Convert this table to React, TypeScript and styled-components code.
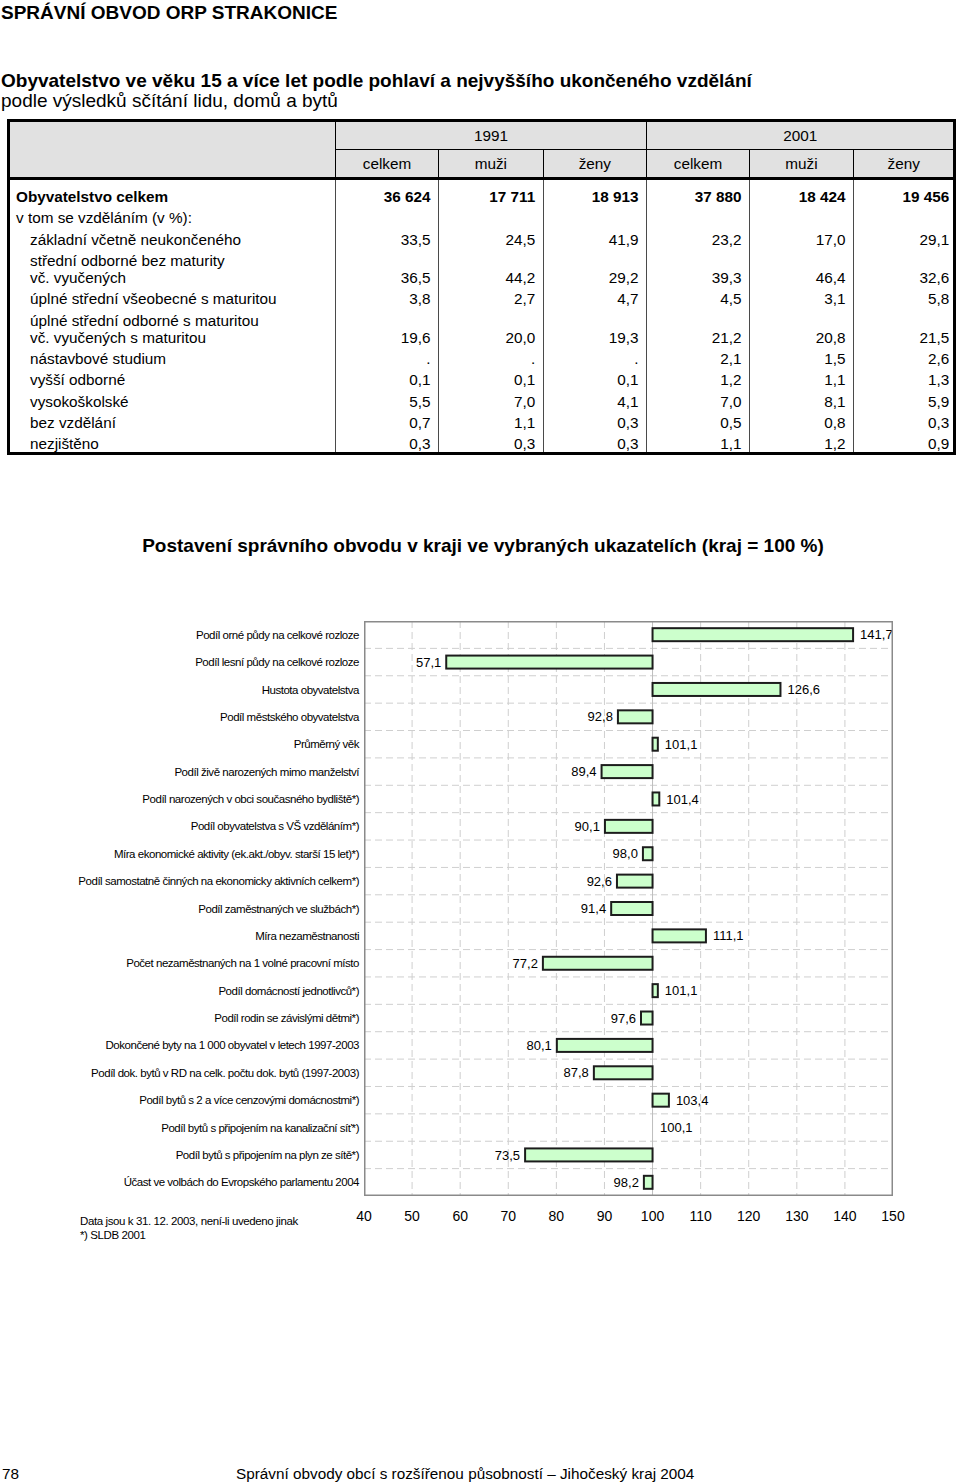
import React from "react";
import styled, { createGlobalStyle } from "styled-components";

const GlobalStyle = createGlobalStyle`
  html, body { margin: 0; padding: 0; background: #fff; }
  body { font-family: "Liberation Sans", Arial, sans-serif; color: #000; }
`;

const Page = styled.div`
  width: 960px;
  min-height: 1484px;
  display: flex;
  flex-direction: column;
  box-sizing: border-box;
`;

const PageTitle = styled.h1`
  margin: 2px 0 0 1px;
  font-size: 19px;
  line-height: 22px;
  font-weight: 700;
`;

const Subtitle = styled.h2`
  margin: 47.4px 0 0 1px;
  font-size: 19px;
  line-height: 20px;
  font-weight: 400;
`;

const SubtitleStrong = styled.span`
  display: block;
  font-weight: 700;
`;

const TableFrame = styled.div`
  margin: 7.6px 0 0 7px;
  width: 949.3px;
  border: 3px solid #000;
  box-sizing: border-box;
`;

const Table = styled.table`
  width: 100%;
  border-collapse: separate;
  border-spacing: 0;
  table-layout: fixed;
  font-size: 15.3px;
  line-height: 17px;
  tbody tr:first-child td {
    padding-top: 7.9px;
  }
`;

const Col = styled.col<{ $w: number }>`
  width: ${(p) => p.$w}px;
`;

const HeadCell = styled.th<{ $divider?: boolean; $bottom: number; $pad: number }>`
  background: #e1e1e1;
  font-weight: 400;
  text-align: center;
  padding: ${(p) => p.$pad}px 0;
  border-left: ${(p) => (p.$divider ? "1px solid #000" : "none")};
  border-bottom: ${(p) => p.$bottom}px solid #000;
`;

const LabelCell = styled.td<{ $level: number; $bold?: boolean }>`
  padding: 4.33px 0 0 ${(p) => (p.$level ? 20 : 6)}px;
  font-weight: ${(p) => (p.$bold ? 700 : 400)};
  vertical-align: bottom;
  white-space: nowrap;
`;

const ValueCell = styled.td<{ $bold?: boolean; $last?: boolean }>`
  padding: 4.33px ${(p) => (p.$last ? 4 : 7.5)}px 0 0;
  text-align: right;
  border-left: 1px solid #4a4a4a;
  vertical-align: bottom;
  font-weight: ${(p) => (p.$bold ? 700 : 400)};
  white-space: nowrap;
`;

const ChartTitle = styled.h2`
  margin: 80.7px 0 0 6px;
  font-size: 19px;
  line-height: 20px;
  font-weight: 700;
  text-align: center;
`;

const ChartGrid = styled.div`
  margin-top: 65px;
  display: grid;
  grid-template-columns: 364px 529px;
  grid-template-rows: 575px auto;
`;

const LabelColumn = styled.div`
  display: flex;
  flex-direction: column;
`;

const CategoryLabel = styled.div`
  height: ${575 / 21}px;
  display: flex;
  align-items: center;
  justify-content: flex-end;
  padding-right: 5px;
  font-size: 11.5px;
  letter-spacing: -0.47px;
  white-space: nowrap;
  color: #000;
`;

const PlotSvg = styled.svg`
  display: block;
  overflow: visible;
  font-family: "Liberation Sans", Arial, sans-serif;
`;

const Footnote = styled.div`
  padding: 17.7px 0 0 80px;
  font-size: 11.5px;
  line-height: 14.5px;
  letter-spacing: -0.4px;
`;

const Footer = styled.footer`
  margin-top: auto;
  padding: 0 0 2px 2px;
  display: grid;
  grid-template-columns: 234px 1fr;
  font-size: 15.3px;
  line-height: 16px;
`;

type Row = {
  label: React.ReactNode;
  level: number;
  bold?: boolean;
  values: string[];
};

const rows: Row[] = [
  { label: "Obyvatelstvo celkem", level: 0, bold: true, values: ["36 624", "17 711", "18 913", "37 880", "18 424", "19 456"] },
  { label: "v tom se vzděláním (v %):", level: 0, values: ["", "", "", "", "", ""] },
  { label: "základní včetně neukončeného", level: 1, values: ["33,5", "24,5", "41,9", "23,2", "17,0", "29,1"] },
  {
    label: (
      <>
        střední odborné bez maturity
        <br />
        vč. vyučených
      </>
    ),
    level: 1,
    values: ["36,5", "44,2", "29,2", "39,3", "46,4", "32,6"],
  },
  { label: "úplné střední všeobecné s maturitou", level: 1, values: ["3,8", "2,7", "4,7", "4,5", "3,1", "5,8"] },
  {
    label: (
      <>
        úplné střední odborné s maturitou
        <br />
        vč. vyučených s maturitou
      </>
    ),
    level: 1,
    values: ["19,6", "20,0", "19,3", "21,2", "20,8", "21,5"],
  },
  { label: "nástavbové studium", level: 1, values: [".", ".", ".", "2,1", "1,5", "2,6"] },
  { label: "vyšší odborné", level: 1, values: ["0,1", "0,1", "0,1", "1,2", "1,1", "1,3"] },
  { label: "vysokoškolské", level: 1, values: ["5,5", "7,0", "4,1", "7,0", "8,1", "5,9"] },
  { label: "bez vzdělání", level: 1, values: ["0,7", "1,1", "0,3", "0,5", "0,8", "0,3"] },
  { label: "nezjištěno", level: 1, values: ["0,3", "0,3", "0,3", "1,1", "1,2", "0,9"] },
];

const indicators: [string, number][] = [
  ["Podíl orné půdy na celkové rozloze", 141.7],
  ["Podíl lesní půdy na celkové rozloze", 57.1],
  ["Hustota obyvatelstva", 126.6],
  ["Podíl městského obyvatelstva", 92.8],
  ["Průměrný věk", 101.1],
  ["Podíl živě narozených mimo manželství", 89.4],
  ["Podíl narozených v obci současného bydliště*)", 101.4],
  ["Podíl obyvatelstva s VŠ vzděláním*)", 90.1],
  ["Míra ekonomické aktivity (ek.akt./obyv. starší 15 let)*)", 98.0],
  ["Podíl samostatně činných na ekonomicky aktivních celkem*)", 92.6],
  ["Podíl zaměstnaných ve službách*)", 91.4],
  ["Míra nezaměstnanosti", 111.1],
  ["Počet nezaměstnaných na 1 volné pracovní místo", 77.2],
  ["Podíl domácností jednotlivců*)", 101.1],
  ["Podíl rodin se závislými dětmi*)", 97.6],
  ["Dokončené byty na 1 000 obyvatel v letech 1997-2003", 80.1],
  ["Podíl dok. bytů v RD na celk. počtu dok. bytů (1997-2003)", 87.8],
  ["Podíl bytů s 2 a více cenzovými domácnostmi*)", 103.4],
  ["Podíl bytů s připojením na kanalizační síť*)", 100.1],
  ["Podíl bytů s připojením na plyn ze sítě*)", 73.5],
  ["Účast ve volbách do Evropského parlamentu 2004", 98.2],
];

const PLOT_W = 529;
const PLOT_H = 575;
const SCALE = PLOT_W / 110;
const BAND = PLOT_H / 21;
const xOf = (v: number) => (v - 40) * SCALE;
const fmt = (v: number) => v.toFixed(1).replace(".", ",");
const ticks = Array.from({ length: 12 }, (_, i) => 40 + i * 10);

function Plot() {
  const x100 = xOf(100);
  return (
    <PlotSvg width={PLOT_W} height={PLOT_H} viewBox={`0 0 ${PLOT_W} ${PLOT_H}`}>
      {Array.from({ length: 20 }, (_, i) => (
        <line
          key={`h${i}`}
          x1={0}
          x2={PLOT_W}
          y1={(i + 1) * BAND}
          y2={(i + 1) * BAND}
          stroke="#cfcfcf"
          strokeWidth={1}
          strokeDasharray="7 4"
        />
      ))}
      {ticks.slice(1, 11).map((t) =>
        t === 100 ? null : (
          <line
            key={`v${t}`}
            x1={xOf(t)}
            x2={xOf(t)}
            y1={0}
            y2={PLOT_H}
            stroke="#cfcfcf"
            strokeWidth={1}
            strokeDasharray="7 4"
          />
        )
      )}
      <line x1={x100} x2={x100} y1={0} y2={PLOT_H} stroke="#bdbdbd" strokeWidth={1} />
      {indicators.map(([, v], i) => {
        const cy = BAND * i + BAND / 2;
        const xv = xOf(v);
        const left = Math.min(xv, x100);
        const w = Math.abs(xv - x100);
        const above = v >= 100;
        return (
          <g key={`b${i}`}>
            {w >= 1 && (
              <rect
                x={left}
                y={cy - 6.5}
                width={w}
                height={13}
                fill="#ccffcc"
                stroke="#1c1c1c"
                strokeWidth={2}
              />
            )}
            <text
              x={above ? xv + 7 : xv - 5}
              y={cy + 4.6}
              fontSize={13}
              textAnchor={above ? "start" : "end"}
              fill="#000"
            >
              {fmt(v)}
            </text>
          </g>
        );
      })}
      <rect
        x={0.75}
        y={0.75}
        width={PLOT_W - 1.5}
        height={PLOT_H - 1.5}
        fill="none"
        stroke="#8a8a8a"
        strokeWidth={1.5}
      />
    </PlotSvg>
  );
}

function Axis() {
  return (
    <PlotSvg width={PLOT_W} height={30} viewBox={`0 0 ${PLOT_W} 30`}>
      {ticks.map((t) => (
        <text key={t} x={xOf(t)} y={25} fontSize={14} textAnchor="middle" fill="#000">
          {t}
        </text>
      ))}
    </PlotSvg>
  );
}

export default function App() {
  const widths = [103, 104.7, 103.3, 103, 104, 100.3];
  return (
    <>
      <GlobalStyle />
      <Page>
        <PageTitle>SPRÁVNÍ OBVOD ORP STRAKONICE</PageTitle>
        <Subtitle>
          <SubtitleStrong>
            Obyvatelstvo ve věku 15 a více let podle pohlaví a nejvyššího ukončeného vzdělání
          </SubtitleStrong>
          podle výsledků sčítání lidu, domů a bytů
        </Subtitle>
        <TableFrame>
          <Table>
            <colgroup>
              <Col $w={325} />
              {widths.map((w, i) => (
                <Col key={i} $w={w} />
              ))}
            </colgroup>
            <thead>
              <tr>
                <HeadCell rowSpan={2} $bottom={3} $pad={0} />
                <HeadCell colSpan={3} $divider $bottom={1} $pad={5.15}>
                  1991
                </HeadCell>
                <HeadCell colSpan={3} $divider $bottom={1} $pad={5.15}>
                  2001
                </HeadCell>
              </tr>
              <tr>
                {["celkem", "muži", "ženy", "celkem", "muži", "ženy"].map((h, i) => (
                  <HeadCell key={i} $divider $bottom={3} $pad={5}>
                    {h}
                  </HeadCell>
                ))}
              </tr>
            </thead>
            <tbody>
              {rows.map((r, i) => (
                <tr key={i}>
                  <LabelCell $level={r.level} $bold={r.bold}>
                    {r.label}
                  </LabelCell>
                  {r.values.map((v, j) => (
                    <ValueCell key={j} $bold={r.bold} $last={j === 5}>
                      {v}
                    </ValueCell>
                  ))}
                </tr>
              ))}
            </tbody>
          </Table>
        </TableFrame>

        <ChartTitle>
          Postavení správního obvodu v kraji ve vybraných ukazatelích (kraj = 100 %)
        </ChartTitle>
        <ChartGrid>
          <LabelColumn>
            {indicators.map(([label]) => (
              <CategoryLabel key={label}>{label}</CategoryLabel>
            ))}
          </LabelColumn>
          <Plot />
          <Footnote>
            Data jsou k 31. 12. 2003, není-li uvedeno jinak
            <br />
            *) SLDB 2001
          </Footnote>
          <Axis />
        </ChartGrid>

        <Footer>
          <span>78</span>
          <span>Správní obvody obcí s rozšířenou působností – Jihočeský kraj 2004</span>
        </Footer>
      </Page>
    </>
  );
}
